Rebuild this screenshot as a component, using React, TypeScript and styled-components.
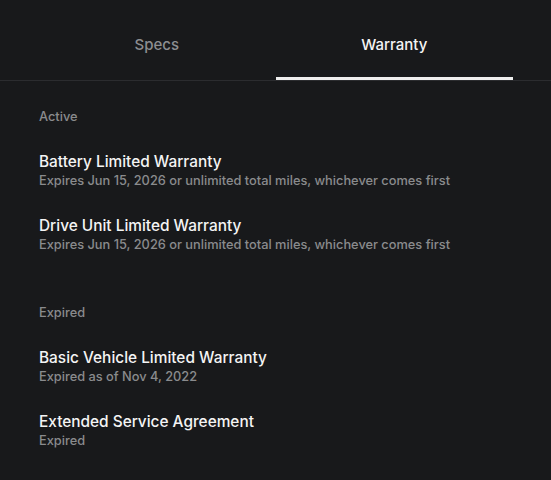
import styled, { createGlobalStyle } from "styled-components";

const GlobalStyle = createGlobalStyle`
	html, body {
		margin: 0;
		padding: 0;
		background: #18191b;
	}

	body {
		font-family: Inter, "Noto Sans", sans-serif;
		-webkit-font-smoothing: antialiased;
	}
`;

interface Warranty {
	title: string;
	detail: string;
}

const sections: { label: string; items: Warranty[] }[] = [
	{
		label: "Active",
		items: [
			{
				title: "Battery Limited Warranty",
				detail: "Expires Jun 15, 2026 or unlimited total miles, whichever comes first",
			},
			{
				title: "Drive Unit Limited Warranty",
				detail: "Expires Jun 15, 2026 or unlimited total miles, whichever comes first",
			},
		],
	},
	{
		label: "Expired",
		items: [
			{ title: "Basic Vehicle Limited Warranty", detail: "Expired as of Nov 4, 2022" },
			{ title: "Extended Service Agreement", detail: "Expired" },
		],
	},
];

const Page = styled.div`
	width: 551px;
	min-height: 480px;
	background: #18191b;
`;

const TabBar = styled.div`
	display: flex;
	height: 80px;
	padding: 0 38px;
	border-bottom: 1px solid #2b2c2f;
`;

const Tab = styled.div<{ $active?: boolean }>`
	flex: 1;
	position: relative;
	display: flex;
	align-items: center;
	justify-content: center;
	padding-top: 8px;
	font-size: 15px;
	font-weight: 500;
	color: ${({ $active }) => ($active ? "#f4f4f4" : "#8d8e90")};

	&::after {
		content: "";
		display: ${({ $active }) => ($active ? "block" : "none")};
		position: absolute;
		left: 0;
		right: 0;
		bottom: 0;
		height: 3px;
		background: #eeeeee;
	}
`;

const Content = styled.div`
	display: flex;
	flex-direction: column;
	gap: 49px;
	padding: 26px 39px 0;
`;

const Section = styled.section`
	display: flex;
	flex-direction: column;
`;

const SectionLabel = styled.div`
	height: 20px;
	line-height: 20px;
	margin-bottom: 25px;
	font-size: 12.8px;
	font-weight: 500;
	color: #8a8b8d;
`;

const List = styled.div`
	display: flex;
	flex-direction: column;
	gap: 26px;
`;

const Item = styled.div`
	display: flex;
	flex-direction: column;
`;

const Title = styled.div`
	height: 20px;
	line-height: 20px;
	font-size: 15.4px;
	font-weight: 500;
	color: #f4f4f4;
`;

const Detail = styled.div`
	height: 18px;
	line-height: 18px;
	font-size: 12.8px;
	font-weight: 500;
	color: #8a8b8d;
`;

export default function App() {
	return (
		<Page>
			<GlobalStyle />
			<TabBar>
				<Tab>Specs</Tab>
				<Tab $active>Warranty</Tab>
			</TabBar>
			<Content>
				{sections.map((section) => (
					<Section key={section.label}>
						<SectionLabel>{section.label}</SectionLabel>
						<List>
							{section.items.map((item) => (
								<Item key={item.title}>
									<Title>{item.title}</Title>
									<Detail>{item.detail}</Detail>
								</Item>
							))}
						</List>
					</Section>
				))}
			</Content>
		</Page>
	);
}
